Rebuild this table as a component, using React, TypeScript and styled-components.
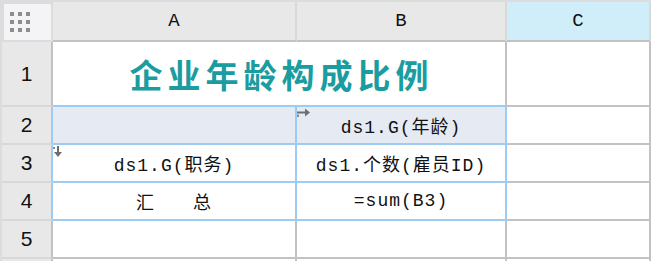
import React from 'react';
import styled, { createGlobalStyle } from "styled-components";

const GRAY = '#c2c2c2';
const BLUE = '#9ccbf4';

const Global = createGlobalStyle`
  html, body {
    margin: 0;
    padding: 0;
    background: #ffffff;
    overflow: hidden;
  }
`

const Sheet = styled.div`
  display: grid;
  grid-template-columns: 51px 244px 210px 144px;
  grid-template-rows: 40px 65px 38px 38px 38px 38px 38px;
  width: 651px;
  height: 261px;
  box-sizing: border-box;
  border-top: 2px solid #dcdcdc;
  border-left: 2px solid #dcdcdc;
  overflow: hidden;
`

const Corner = styled.div`
  box-sizing: border-box;
  border: 2px solid #dcdcdc;
  background: #f4f4f6;
  display: flex;
  align-items: center;
  padding-left: 6px;
`

const ColHeader = styled.div<{ $active?: boolean }>`
  box-sizing: border-box;
  background: ${p => (p.$active ? '#d0eef9' : '#e8e8e8')};
  border-right: 2px solid #d9d9d9;
  border-bottom: 2px solid ${GRAY};
  display: flex;
  align-items: center;
  justify-content: center;
  font-family: "Liberation Mono", monospace;
  font-size: 19px;
  color: #111;
`

const RowHeader = styled.div<{ $blue?: boolean }>`
  box-sizing: border-box;
  background: #e8e8e8;
  border-right: 2px solid ${p => (p.$blue ? BLUE : GRAY)};
  border-bottom: 2px solid #d8d8d8;
  display: flex;
  align-items: center;
  justify-content: center;
  font-family: "Liberation Sans", sans-serif;
  font-size: 21px;
  color: #111;
`

const Cell = styled.div<{ $span?: number; $right?: string; $bottom?: string; $bg?: string }>`
  position: relative;
  box-sizing: border-box;
  grid-column: span ${p => p.$span ?? 1};
  background: ${p => p.$bg ?? '#ffffff'};
  border-right: 2px solid ${p => p.$right ?? GRAY};
  border-bottom: 2px solid ${p => p.$bottom ?? GRAY};
  display: flex;
  align-items: center;
  justify-content: center;
  font-family: "Liberation Mono", "Noto Sans CJK SC", monospace;
  font-size: 18px;
  letter-spacing: 1px;
  color: #111;
  white-space: pre;
`

const Title = styled.span`
  font-family: "Noto Sans CJK SC", sans-serif;
  font-weight: 700;
  font-size: 33px;
  letter-spacing: 5px;
  color: #1a9ca0;
  padding-left: 5px;
`

const Marker = styled.svg`
  position: absolute;
  left: 0;
  top: 1px;
`

const GridIcon = () => (
    <svg width="21" height="21" viewBox="0 0 21 21">
        {[0, 8, 16].map(y => [0, 8, 16].map(x => (
            <rect key={`${x}-${y}`} x={x} y={y} width="4" height="4" fill="#8d8d8d"/>
        )))}
    </svg>
);

const RightArrow = () => (
    <Marker width="14" height="10" viewBox="0 0 14 10">
        <path d="M0 4.5 H9" stroke="#6e6e6e" strokeWidth="2"/>
        <path d="M8 0.5 L13 4.5 L8 8.5 Z" fill="#6e6e6e"/>
        <rect x="0" y="6.5" width="2" height="2.5" fill="#8a8a8a"/>
    </Marker>
);

const DownArrow = () => (
    <Marker width="10" height="12" viewBox="0 0 10 12">
        <path d="M5 0 V7" stroke="#6e6e6e" strokeWidth="2"/>
        <path d="M1 6 L5 11 L9 6 Z" fill="#6e6e6e"/>
        <rect x="0" y="1" width="2" height="2" fill="#8a8a8a"/>
    </Marker>
);

// rows 2-4 in columns A and B are the selected block
const inBlock = (row: number, col: number) => row >= 2 && row <= 4 && col <= 1;

const App = () => {
    const rows: { row: number; cells: React.ReactNode[] }[] = [
        { row: 2, cells: [null, <><RightArrow/>ds1.G(年龄)</>, null] },
        { row: 3, cells: [<><DownArrow/>ds1.G(职务)</>, 'ds1.个数(雇员ID)', null] },
        { row: 4, cells: ['汇　　总', '=sum(B3)', null] },
        { row: 5, cells: [null, null, null] },
        { row: 6, cells: [null, null, null] },
    ];

    return (
        <>
            <Global/>
            <Sheet>
                <Corner><GridIcon/></Corner>
                <ColHeader>A</ColHeader>
                <ColHeader>B</ColHeader>
                <ColHeader $active>C</ColHeader>

                <RowHeader>1</RowHeader>
                <Cell $span={2} $bottom={BLUE}><Title>企业年龄构成比例</Title></Cell>
                <Cell/>

                {rows.map(({ row, cells }) => (
                    <React.Fragment key={row}>
                        <RowHeader $blue={row >= 2 && row <= 4}>{row <= 5 ? row : ''}</RowHeader>
                        {cells.map((content, col) => (
                            <Cell
                                key={col}
                                $right={inBlock(row, col) ? BLUE : GRAY}
                                $bottom={inBlock(row, col) ? BLUE : GRAY}
                                $bg={row === 2 && col <= 1 ? '#e6eaf3' : undefined}
                            >
                                {content}
                            </Cell>
                        ))}
                    </React.Fragment>
                ))}
            </Sheet>
        </>
    );
};

export default App;
